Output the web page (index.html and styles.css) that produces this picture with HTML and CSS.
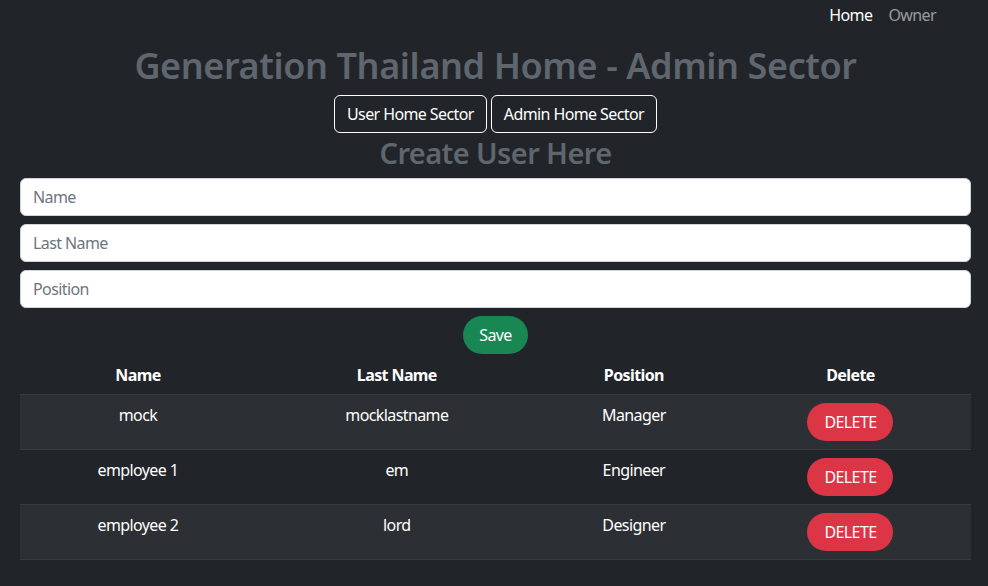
FILE: index.html
```html
<!DOCTYPE html>
<html>
<head>
<meta charset="utf-8">
<link rel="stylesheet" href="styles.css">
</head>
<body>
<nav class="navbar">
  <a class="nav-link active">Home</a>
  <a class="nav-link">Owner</a>
</nav>
<main class="page">
  <h1 class="title">Generation Thailand Home - Admin Sector</h1>
  <div class="sector-buttons">
    <button class="btn-outline">User Home Sector</button>
    <button class="btn-outline">Admin Home Sector</button>
  </div>
  <h2 class="subtitle">Create User Here</h2>
  <form class="user-form">
    <input class="field" placeholder="Name">
    <input class="field" placeholder="Last Name">
    <input class="field" placeholder="Position">
    <div class="save-row"><button type="button" class="btn-save">Save</button></div>
  </form>
  <table class="users">
    <colgroup>
      <col class="c1"><col class="c2"><col class="c3"><col class="c4">
    </colgroup>
    <thead>
      <tr><th>Name</th><th>Last Name</th><th>Position</th><th>Delete</th></tr>
    </thead>
    <tbody>
      <tr><td>mock</td><td>mocklastname</td><td>Manager</td><td><button class="btn-delete">DELETE</button></td></tr>
      <tr><td>employee 1</td><td>em</td><td>Engineer</td><td><button class="btn-delete">DELETE</button></td></tr>
      <tr><td>employee 2</td><td>lord</td><td>Designer</td><td><button class="btn-delete">DELETE</button></td></tr>
    </tbody>
  </table>
</main>
</body>
</html>
```
FILE: styles.css
```css
* { box-sizing: border-box; }
html, body { margin: 0; padding: 0; }
body {
  background: #212529;
  color: #fff;
  font-family: "Segoe UI", "Noto Sans", "Open Sans", sans-serif;
  font-size: 16px;
  line-height: 1.5;
  letter-spacing: -0.6px;
  height: 586px;
  overflow: hidden;
}
.navbar {
  display: flex;
  justify-content: flex-end;
  padding: 3px 44px 0 0;
  height: 40px;
}
.nav-link {
  padding: 0 8px;
  color: rgba(255,255,255,0.55);
  font-size: 16px;
}
.nav-link.active { color: #fff; }
.page {
  padding: 0 17px 0 20px;
}
.title {
  margin: 4px 0 7px;
  text-align: center;
  font-size: 36px;
  line-height: 44px;
  font-weight: 600;
  color: #5f666e;
  letter-spacing: -0.4px;
}
.sector-buttons {
  display: flex;
  justify-content: center;
  gap: 4px;
}
.btn-outline {
  font: inherit;
  letter-spacing: inherit;
  color: #fff;
  background: transparent;
  border: 1px solid #fff;
  border-radius: 6px;
  padding: 6px 12px;
  height: 38px;
}
.subtitle {
  margin: 2px 0 7px;
  text-align: center;
  font-size: 29px;
  line-height: 36px;
  font-weight: 600;
  color: #5f666e;
  letter-spacing: -0.6px;
}
.user-form {
  display: flex;
  flex-direction: column;
  gap: 8px;
}
.field {
  font: inherit;
  letter-spacing: inherit;
  height: 38px;
  padding: 6px 12px;
  border: 1px solid #ced4da;
  border-radius: 6px;
  background: #fff;
  color: #212529;
}
.field::placeholder { color: #6c757d; }
.save-row {
  display: flex;
  justify-content: center;
}
.btn-save {
  font: inherit;
  letter-spacing: inherit;
  color: #fff;
  background: #198754;
  border: 0;
  border-radius: 19px;
  height: 38px;
  padding: 0 16px;
}
.users {
  width: 100%;
  border-collapse: collapse;
  margin-top: 3px;
}
.c1 { width: 24.8%; }
.c2 { width: 29.65%; }
.c3 { width: 20.2%; }
.c4 { width: 25.35%; }
.users th {
  font-weight: 700;
  padding: 8px;
  text-align: center;
  border-bottom: 1px solid #373b3e;
  line-height: 21px;
}
.users td {
  padding: 8px;
  text-align: center;
  vertical-align: top;
  border-bottom: 1px solid #373b3e;
}
.users tbody tr { background: #2c3034; }
.users tbody tr:nth-child(2) { background: #212529; }
.btn-delete {
  font: inherit;
  letter-spacing: inherit;
  color: #fff;
  background: #dc3545;
  border: 0;
  border-radius: 19px;
  height: 38px;
  padding: 0 17px;
  margin: 0;
  vertical-align: top;
}
```
